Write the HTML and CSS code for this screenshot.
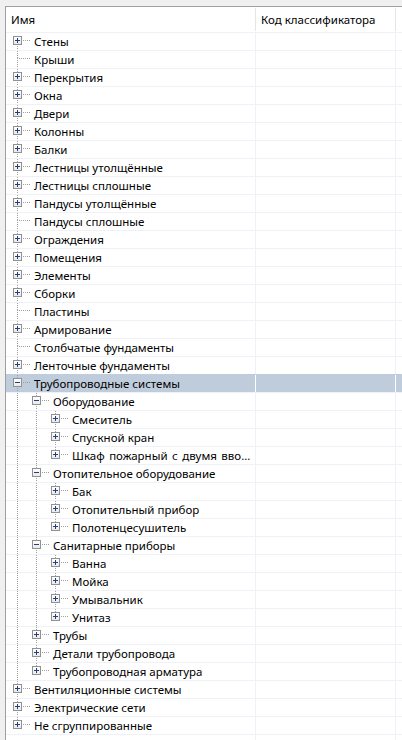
FILE: index.html
```html
<!DOCTYPE html>
<html lang="ru">
<head>
<meta charset="utf-8">
<title>Дерево</title>
<link rel="stylesheet" href="styles.css">
</head>
<body>
<div class="panel">
  <div class="hd">
    <div class="hc h1">Имя</div>
    <div class="hc h2">Код классификатора</div>
    <div class="hc h3"></div>
  </div>
  <div class="rows">
    <div class="row"><div class="c1"><span class="n first more"><i class="h"></i><b class="b p"></b></span><span class="t">Стены</span></div><div class="c2"></div><div class="c3"></div></div>
    <div class="row"><div class="c1"><span class="n more"><i class="h"></i></span><span class="t">Крыши</span></div><div class="c2"></div><div class="c3"></div></div>
    <div class="row"><div class="c1"><span class="n more"><i class="h"></i><b class="b p"></b></span><span class="t">Перекрытия</span></div><div class="c2"></div><div class="c3"></div></div>
    <div class="row"><div class="c1"><span class="n more"><i class="h"></i><b class="b p"></b></span><span class="t">Окна</span></div><div class="c2"></div><div class="c3"></div></div>
    <div class="row"><div class="c1"><span class="n more"><i class="h"></i><b class="b p"></b></span><span class="t">Двери</span></div><div class="c2"></div><div class="c3"></div></div>
    <div class="row"><div class="c1"><span class="n more"><i class="h"></i><b class="b p"></b></span><span class="t">Колонны</span></div><div class="c2"></div><div class="c3"></div></div>
    <div class="row"><div class="c1"><span class="n more"><i class="h"></i><b class="b p"></b></span><span class="t">Балки</span></div><div class="c2"></div><div class="c3"></div></div>
    <div class="row"><div class="c1"><span class="n more"><i class="h"></i><b class="b p"></b></span><span class="t">Лестницы утолщённые</span></div><div class="c2"></div><div class="c3"></div></div>
    <div class="row"><div class="c1"><span class="n more"><i class="h"></i><b class="b p"></b></span><span class="t">Лестницы сплошные</span></div><div class="c2"></div><div class="c3"></div></div>
    <div class="row"><div class="c1"><span class="n more"><i class="h"></i><b class="b p"></b></span><span class="t">Пандусы утолщённые</span></div><div class="c2"></div><div class="c3"></div></div>
    <div class="row"><div class="c1"><span class="n more"><i class="h"></i></span><span class="t">Пандусы сплошные</span></div><div class="c2"></div><div class="c3"></div></div>
    <div class="row"><div class="c1"><span class="n more"><i class="h"></i><b class="b p"></b></span><span class="t">Ограждения</span></div><div class="c2"></div><div class="c3"></div></div>
    <div class="row"><div class="c1"><span class="n more"><i class="h"></i><b class="b p"></b></span><span class="t">Помещения</span></div><div class="c2"></div><div class="c3"></div></div>
    <div class="row"><div class="c1"><span class="n more"><i class="h"></i><b class="b p"></b></span><span class="t">Элементы</span></div><div class="c2"></div><div class="c3"></div></div>
    <div class="row"><div class="c1"><span class="n more"><i class="h"></i><b class="b p"></b></span><span class="t">Сборки</span></div><div class="c2"></div><div class="c3"></div></div>
    <div class="row"><div class="c1"><span class="n more"><i class="h"></i></span><span class="t">Пластины</span></div><div class="c2"></div><div class="c3"></div></div>
    <div class="row"><div class="c1"><span class="n more"><i class="h"></i><b class="b p"></b></span><span class="t">Армирование</span></div><div class="c2"></div><div class="c3"></div></div>
    <div class="row"><div class="c1"><span class="n more"><i class="h"></i></span><span class="t">Столбчатые фундаменты</span></div><div class="c2"></div><div class="c3"></div></div>
    <div class="row"><div class="c1"><span class="n more"><i class="h"></i><b class="b p"></b></span><span class="t">Ленточные фундаменты</span></div><div class="c2"></div><div class="c3"></div></div>
    <div class="row sel"><div class="c1"><span class="n more"><i class="h"></i><b class="b m"></b></span><span class="t">Трубопроводные системы</span></div><div class="c2"></div><div class="c3"></div></div>

    <div class="row"><div class="c1"><span class="g v"></span><span class="n more"><i class="h"></i><b class="b m"></b></span><span class="t">Оборудование</span></div><div class="c2"></div><div class="c3"></div></div>
    <div class="row"><div class="c1"><span class="g v"></span><span class="g v"></span><span class="n more"><i class="h"></i><b class="b p"></b></span><span class="t">Смеситель</span></div><div class="c2"></div><div class="c3"></div></div>
    <div class="row"><div class="c1"><span class="g v"></span><span class="g v"></span><span class="n more"><i class="h"></i><b class="b p"></b></span><span class="t">Спускной кран</span></div><div class="c2"></div><div class="c3"></div></div>
    <div class="row"><div class="c1"><span class="g v"></span><span class="g v"></span><span class="n"><i class="h"></i><b class="b p"></b></span><span class="t wide">Шкаф пожарный с двумя вво...</span></div><div class="c2"></div><div class="c3"></div></div>

    <div class="row"><div class="c1"><span class="g v"></span><span class="n more"><i class="h"></i><b class="b m"></b></span><span class="t">Отопительное оборудование</span></div><div class="c2"></div><div class="c3"></div></div>
    <div class="row"><div class="c1"><span class="g v"></span><span class="g v"></span><span class="n more"><i class="h"></i><b class="b p"></b></span><span class="t">Бак</span></div><div class="c2"></div><div class="c3"></div></div>
    <div class="row"><div class="c1"><span class="g v"></span><span class="g v"></span><span class="n more"><i class="h"></i><b class="b p"></b></span><span class="t">Отопительный прибор</span></div><div class="c2"></div><div class="c3"></div></div>
    <div class="row"><div class="c1"><span class="g v"></span><span class="g v"></span><span class="n"><i class="h"></i><b class="b p"></b></span><span class="t">Полотенцесушитель</span></div><div class="c2"></div><div class="c3"></div></div>

    <div class="row"><div class="c1"><span class="g v"></span><span class="n more"><i class="h"></i><b class="b m"></b></span><span class="t">Санитарные приборы</span></div><div class="c2"></div><div class="c3"></div></div>
    <div class="row"><div class="c1"><span class="g v"></span><span class="g v"></span><span class="n more"><i class="h"></i><b class="b p"></b></span><span class="t">Ванна</span></div><div class="c2"></div><div class="c3"></div></div>
    <div class="row"><div class="c1"><span class="g v"></span><span class="g v"></span><span class="n more"><i class="h"></i><b class="b p"></b></span><span class="t">Мойка</span></div><div class="c2"></div><div class="c3"></div></div>
    <div class="row"><div class="c1"><span class="g v"></span><span class="g v"></span><span class="n more"><i class="h"></i><b class="b p"></b></span><span class="t">Умывальник</span></div><div class="c2"></div><div class="c3"></div></div>
    <div class="row"><div class="c1"><span class="g v"></span><span class="g v"></span><span class="n"><i class="h"></i><b class="b p"></b></span><span class="t">Унитаз</span></div><div class="c2"></div><div class="c3"></div></div>

    <div class="row"><div class="c1"><span class="g v"></span><span class="n more"><i class="h"></i><b class="b p"></b></span><span class="t">Трубы</span></div><div class="c2"></div><div class="c3"></div></div>
    <div class="row"><div class="c1"><span class="g v"></span><span class="n more"><i class="h"></i><b class="b p"></b></span><span class="t">Детали трубопровода</span></div><div class="c2"></div><div class="c3"></div></div>
    <div class="row"><div class="c1"><span class="g v"></span><span class="n"><i class="h"></i><b class="b p"></b></span><span class="t">Трубопроводная арматура</span></div><div class="c2"></div><div class="c3"></div></div>

    <div class="row"><div class="c1"><span class="n more"><i class="h"></i><b class="b p"></b></span><span class="t">Вентиляционные системы</span></div><div class="c2"></div><div class="c3"></div></div>
    <div class="row"><div class="c1"><span class="n more"><i class="h"></i><b class="b p"></b></span><span class="t">Электрические сети</span></div><div class="c2"></div><div class="c3"></div></div>
    <div class="row"><div class="c1"><span class="n"><i class="h"></i><b class="b p"></b></span><span class="t">Не сгруппированные</span></div><div class="c2"></div><div class="c3"></div></div>
    <div class="row empty"><div class="c1"></div><div class="c2"></div><div class="c3"></div></div>
  </div>
</div>
</body>
</html>
```

FILE: styles.css
```css
html, body {
  margin: 0;
  padding: 0;
  background: #f0f0f0;
  width: 402px;
  height: 740px;
  overflow: hidden;
}
body {
  font-family: "Noto Sans", "Open Sans", sans-serif;
  font-size: 11.5px;
  color: #000;
}
.panel {
  margin: 6px 0 0 5px;
  border-top: 1px solid #a0a0a0;
  border-left: 1px solid #a0a0a0;
  background: #fff;
  width: 600px;
  height: 740px;
}
.hd {
  display: flex;
  align-items: center;
  height: 25px;
}
.hc {
  height: 23px;
  display: flex;
  align-items: center;
  box-sizing: border-box;
  white-space: nowrap;
  padding-left: 5px;
  flex-shrink: 0;
}
.h1 { width: 249px; }
.h2 { width: 140px; border-left: 1px solid #e5e5e5; }
.h3 { width: 150px; border-left: 1px solid #e5e5e5; }

.row {
  display: flex;
  height: 18px;
  box-sizing: border-box;
  border-top: 1px solid #eef1f6;
}
.c1, .c2, .c3 {
  flex-shrink: 0;
  height: 17px;
  box-sizing: border-box;
}
.c1 {
  width: 249px;
  display: flex;
  align-items: center;
  overflow: hidden;
}
.c2 { width: 140px; border-left: 1px solid #eef1f6; }
.c3 { width: 150px; border-left: 1px solid #eef1f6; }

.sel { border-top-color: #bfccdb; }
.sel .c1, .sel .c2, .sel .c3 { background: #bfccdb; }
.sel .c2, .sel .c3 { border-left-color: #fff; }

/* tree guides */
.g, .n {
  position: relative;
  flex-shrink: 0;
  height: 17px;
}
.g { width: 19px; }
.n { width: 28px; }
.g.v::before,
.n::before,
.n.more::after {
  content: "";
  position: absolute;
  left: 11px;
  width: 1px;
  background: repeating-linear-gradient(to bottom, #a0a0a0 0 1px, transparent 1px 2px);
}
.g.v::before { top: 0; bottom: 0; }
.n::before { top: 0; height: 8px; }
.n.first::before { display: none; }
.n.more::after { top: 7px; bottom: 0; }
.h {
  position: absolute;
  left: 11px;
  top: 7px;
  width: 14px;
  height: 1px;
  background: repeating-linear-gradient(to right, #a0a0a0 0 1px, transparent 1px 2px);
}
.b {
  position: absolute;
  left: 7px;
  top: 3px;
  width: 9px;
  height: 9px;
  box-sizing: border-box;
  border: 1px solid #919191;
  background: linear-gradient(#ffffff, #e9e9e9);
  z-index: 1;
}
.b::before, .b.p::after {
  content: "";
  position: absolute;
  background: #24407c;
}
.b::before { left: 1px; top: 3px; width: 5px; height: 1px; }
.b.p::after { left: 3px; top: 1px; width: 1px; height: 5px; }

.t {
  white-space: nowrap;
  line-height: 17px;
}
.wide { word-spacing: 1.5px; }
```
